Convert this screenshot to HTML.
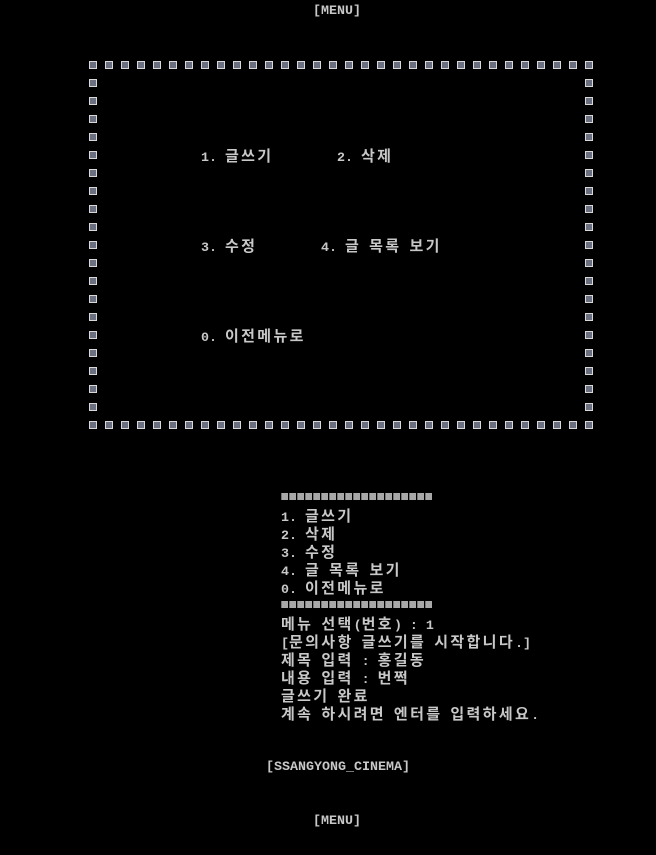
<!DOCTYPE html>
<html><head><meta charset="utf-8"><style>
html,body{margin:0;padding:0;background:#000;}
body{width:656px;height:855px;position:relative;overflow:hidden;font-family:"Liberation Mono",monospace;font-size:13.33px;color:#c8c8c8;font-weight:bold;}
.t{position:absolute;line-height:18px;white-space:pre;}
.t div,.s{height:18px;overflow:visible;}
.k{font-family:"Noto Sans CJK KR","NanumGothic",sans-serif;font-size:15px;line-height:18px;font-weight:bold;letter-spacing:2.35px;}
.bar{position:absolute;left:281px;width:152px;height:7px;background:repeating-linear-gradient(90deg,#5a7ab0 0,#5a7ab0 1px,#a8a8a8 1px,#a8a8a8 7px,#000 7px,#000 8px);}
</style></head><body>
<svg width="656" height="855" style="position:absolute;left:0;top:0">
<defs>
<pattern id="h" x="89" y="61" width="16" height="18" patternUnits="userSpaceOnUse"><rect x="0.5" y="0.5" width="7" height="7" fill="#6a7080" stroke="#d8d8d8"/></pattern>
</defs>
<rect x="89" y="61" width="504" height="8" fill="url(#h)"/>
<rect x="89" y="421" width="504" height="8" fill="url(#h)"/>
<rect x="89" y="61" width="8" height="368" fill="url(#h)"/>
<rect x="585" y="61" width="8" height="368" fill="url(#h)"/>
</svg>
<div class="t" style="left:313px;top:3px">[MENU]</div>
<div class="t s" style="left:201px;top:147px">1. <b class="k">글쓰기</b></div>
<div class="t s" style="left:337px;top:147px">2. <b class="k">삭제</b></div>
<div class="t s" style="left:201px;top:237px">3. <b class="k">수정</b></div>
<div class="t s" style="left:321px;top:237px">4. <b class="k">글</b> <b class="k">목록</b> <b class="k">보기</b></div>
<div class="t s" style="left:201px;top:327px">0. <b class="k">이전메뉴로</b></div>
<div class="bar" style="top:493px"></div>
<div class="t" style="left:281px;top:507px"><div>1. <b class="k">글쓰기</b></div><div>2. <b class="k">삭제</b></div><div>3. <b class="k">수정</b></div><div>4. <b class="k">글</b> <b class="k">목록</b> <b class="k">보기</b></div><div>0. <b class="k">이전메뉴로</b></div></div>
<div class="bar" style="top:601px"></div>
<div class="t" style="left:281px;top:615px"><div><b class="k">메뉴</b> <b class="k">선택</b>(<b class="k">번호</b>) : 1</div><div>[<b class="k">문의사항</b> <b class="k">글쓰기를</b> <b class="k">시작합니다</b>.]</div><div><b class="k">제목</b> <b class="k">입력</b> : <b class="k">홍길동</b></div><div><b class="k">내용</b> <b class="k">입력</b> : <b class="k">번쩍</b></div><div><b class="k">글쓰기</b> <b class="k">완료</b></div><div><b class="k">계속</b> <b class="k">하시려면</b> <b class="k">엔터를</b> <b class="k">입력하세요</b>.</div></div>
<div class="t" style="left:266px;top:759px">[SSANGYONG_CINEMA]</div>
<div class="t" style="left:313px;top:813px">[MENU]</div>
</body></html>
